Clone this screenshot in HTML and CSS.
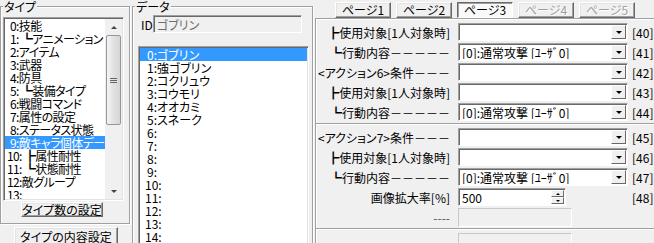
FILE: index.html
```html
<!DOCTYPE html>
<html>
<head>
	<title>database</title>
	<meta charset="utf-8">
	<link rel="stylesheet" href="styles.css">
</head>
<body>
	<div class="window">

		<div class="type-col">
			<fieldset class="group type-group">
				<legend>タイプ</legend>
				<div class="listbox type-list">
					<ul class="items">
						<li class="pad">0:技能</li>
						<li class="pad">1: ┗アニメーション</li>
						<li class="pad">2:アイテム</li>
						<li class="pad">3:武器</li>
						<li class="pad">4:防具</li>
						<li class="pad">5: ┗装備タイプ</li>
						<li class="pad">6:戦闘コマンド</li>
						<li class="pad">7:属性の設定</li>
						<li class="pad">8:ステータス状態</li>
						<li class="pad selected">9:敵キャラ個体データ</li>
						<li>10: ┣属性耐性</li>
						<li>11: ┗状態耐性</li>
						<li>12:敵グループ</li>
						<li>13:</li>
					</ul>
					<div class="vscroll">
						<span class="sb-arrow sb-up"></span>
						<span class="sb-thumb"><span class="sb-grip"></span></span>
						<span class="sb-track"></span>
						<span class="sb-arrow sb-down"></span>
					</div>
				</div>
				<button class="btn type-count" type="button">タイプ数の設定</button>
			</fieldset>
			<button class="btn type-content" type="button">タイプの内容設定</button>
		</div>

		<fieldset class="group data-group">
			<legend>データ</legend>
			<div class="id-row">
				<span class="id-label">ID</span>
				<input class="id-field" type="text" value="ゴブリン" readonly>
			</div>
			<ul class="listbox data-list">
				<li class="pad selected">0:ゴブリン</li>
				<li class="pad">1:強ゴブリン</li>
				<li class="pad">2:コクリュウ</li>
				<li class="pad">3:コウモリ</li>
				<li class="pad">4:オオカミ</li>
				<li class="pad">5:スネーク</li>
				<li class="pad">6:</li>
				<li class="pad">7:</li>
				<li class="pad">8:</li>
				<li class="pad">9:</li>
				<li>10:</li>
				<li>11:</li>
				<li>12:</li>
				<li>13:</li>
				<li>14:</li>
				<li>15:</li>
			</ul>
		</fieldset>

		<div class="page-col">
			<div class="tabs">
				<button class="tab" type="button">ページ1</button>
				<button class="tab" type="button">ページ2</button>
				<button class="tab tab_on" type="button">ページ3</button>
				<button class="tab" type="button" disabled>ページ4</button>
				<button class="tab" type="button" disabled>ページ5</button>
			</div>

			<div class="block">
				<div class="row">
					<span class="row__label">┣使用対象[1人対象時]</span>
					<div class="row__field"><div class="combo"><span class="combo__text"></span><span class="combo__btn"></span></div></div>
					<span class="row__num">[40]</span>
				</div>
				<div class="row">
					<span class="row__label">┗行動内容－－－－－</span>
					<div class="row__field"><div class="combo"><span class="combo__text">[0]:通常攻撃 [ﾕｰｻﾞ0]</span><span class="combo__btn"></span></div></div>
					<span class="row__num">[41]</span>
				</div>
				<div class="row">
					<span class="row__label">&lt;アクション6&gt;条件－－－</span>
					<div class="row__field"><div class="combo"><span class="combo__text"></span><span class="combo__btn"></span></div></div>
					<span class="row__num">[42]</span>
				</div>
				<div class="row">
					<span class="row__label">┣使用対象[1人対象時]</span>
					<div class="row__field"><div class="combo"><span class="combo__text"></span><span class="combo__btn"></span></div></div>
					<span class="row__num">[43]</span>
				</div>
				<div class="row">
					<span class="row__label">┗行動内容－－－－－</span>
					<div class="row__field"><div class="combo"><span class="combo__text">[0]:通常攻撃 [ﾕｰｻﾞ0]</span><span class="combo__btn"></span></div></div>
					<span class="row__num">[44]</span>
				</div>
			</div>

			<div class="block">
				<div class="row">
					<span class="row__label">&lt;アクション7&gt;条件－－－</span>
					<div class="row__field"><div class="combo"><span class="combo__text"></span><span class="combo__btn"></span></div></div>
					<span class="row__num">[45]</span>
				</div>
				<div class="row">
					<span class="row__label">┣使用対象[1人対象時]</span>
					<div class="row__field"><div class="combo"><span class="combo__text"></span><span class="combo__btn"></span></div></div>
					<span class="row__num">[46]</span>
				</div>
				<div class="row">
					<span class="row__label">┗行動内容－－－－－</span>
					<div class="row__field"><div class="combo"><span class="combo__text">[0]:通常攻撃 [ﾕｰｻﾞ0]</span><span class="combo__btn"></span></div></div>
					<span class="row__num">[47]</span>
				</div>
				<div class="row">
					<span class="row__label">画像拡大率[%]</span>
					<div class="row__field">
						<div class="spin">
							<span class="spin__text">500</span>
							<span class="spin__btns"><span class="spin__up"></span><span class="spin__down"></span></span>
						</div>
					</div>
					<span class="row__num">[48]</span>
				</div>
				<div class="row">
					<span class="row__label row__label_dim">----</span>
					<div class="row__field"><div class="static"></div></div>
				</div>
			</div>

			<div class="block">
				<div class="row">
					<span class="row__label"></span>
					<div class="row__field"><div class="static"></div></div>
				</div>
			</div>
		</div>

	</div>
</body>
</html>
```

FILE: styles.css
```css
* {
	box-sizing: border-box;
}
body {
	margin: 0;
	background: #f0f0f0;
	color: #000;
	font: 12px/13px "Noto Sans CJK JP", "Noto Sans CJK SC", sans-serif;
	font-feature-settings: "palt";
	overflow: hidden;
}
ul {
	margin: 0;
	padding: 0;
	list-style: none;
}
.window {
	display: flex;
	align-items: flex-start;
	width: 654px;
	height: 243px;
	overflow: hidden;
}

/* group boxes */
.group {
	margin: 0;
	padding: 0;
	min-width: 0;
	border: 1px solid #a0a0a0;
	box-shadow: inset 1px 1px 0 #fff, 1px 1px 0 #fff;
}
.group legend {
	margin-left: 2px;
	padding: 0 1px;
	line-height: 13px;
	background: #f0f0f0;
}

/* sunken boxes */
.listbox {
	background: #fff;
	border: 1px solid;
	border-color: #a0a0a0 #fff #fff #a0a0a0;
	box-shadow: inset 1px 1px 0 #696969, inset -1px -1px 0 #e3e3e3;
	padding: 1px;
	overflow: hidden;
}
.listbox li, .items li {
	height: 13px;
	padding-left: 2px;
	white-space: nowrap;
}
.selected {
	background: #3399ff;
	color: #fff;
}

.btn {
	font: inherit;
	line-height: 12px;
	padding: 0;
	color: #000;
	background: #f0f0f0;
	border: 1px solid;
	border-color: #fff #696969 #696969 #fff;
	box-shadow: inset -1px -1px 0 #a0a0a0, inset 1px 1px 0 #e3e3e3;
}

/* type column */
.type-col {
	width: 130px;
	display: flex;
	flex-direction: column;
	align-items: flex-start;
}
.type-group {
	width: 130px;
	padding-bottom: 6px;
}
.type-list {
	display: flex;
	width: 121px;
	height: 184px;
	margin: 4px 0 0 2px;
}
.type-list .items {
	flex: 1;
	overflow: hidden;
	letter-spacing: -0.6px;
}
.type-list li.pad {
	padding-left: 5px;
}
.vscroll {
	width: 17px;
	display: flex;
	flex-direction: column;
	align-items: center;
	background: #f0f0f0;
}
.sb-arrow {
	height: 16px;
	width: 17px;
	display: flex;
	align-items: center;
	justify-content: center;
}
.sb-arrow:after {
	content: '';
	border-left: 3px solid transparent;
	border-right: 3px solid transparent;
}
.sb-up:after {
	border-bottom: 3px solid #444;
}
.sb-down:after {
	border-top: 3px solid #444;
}
.sb-thumb {
	width: 15px;
	height: 90px;
	border: 1px solid #979797;
	border-radius: 2px;
	background: linear-gradient(to right, #f4f4f4, #e2e2e2 50%, #d6d6d6);
	display: flex;
	align-items: center;
	justify-content: center;
}
.sb-grip {
	width: 7px;
	height: 5px;
	border-top: 1px solid #666;
	border-bottom: 1px solid #666;
	background: linear-gradient(#666, #666) center / 100% 1px no-repeat;
}
.sb-track {
	flex: 1;
}
.type-count {
	width: 82px;
	height: 15px;
	margin: 1px 0 0 20px;
}
.type-content {
	width: 104px;
	height: 20px;
	margin: 3px 0 0 14px;
}

/* data column */
.data-group {
	width: 181px;
	height: 270px;
	margin-left: 2px;
}
.id-row {
	display: flex;
	align-items: center;
	margin-top: 2px;
	padding-left: 8px;
}
.id-label {
	width: 12px;
}
.id-field {
	width: 149px;
	height: 18px;
	padding: 0 0 0 3px;
	font: inherit;
	color: #6d6d6d;
	background: #f0f0f0;
	border: 1px solid;
	border-color: #a0a0a0 #fff #fff #a0a0a0;
	box-shadow: inset 1px 1px 0 #696969;
	outline: none;
}
.data-list {
	width: 171px;
	height: 230px;
	margin: 13px 0 0 5px;
}
.data-list li {
	padding-left: 5px;
}
.data-list li.pad {
	padding-left: 7px;
}

/* page column */
.page-col {
	flex: 1;
	margin-left: 2px;
}
.tabs {
	display: flex;
	gap: 5px;
	padding: 2px 0 0 20px;
}
.tab {
	width: 56px;
	height: 16px;
	padding: 0;
	font: inherit;
	line-height: 12px;
	color: #000;
	background: #f0f0f0;
	border: 1px solid;
	border-color: #fff #696969 #696969 #fff;
	box-shadow: inset -1px -1px 0 #a0a0a0, inset 1px 1px 0 #e3e3e3;
}
.tab_on {
	background: #fafafa;
	border-color: #696969 #fff #fff #696969;
	box-shadow: inset 1px 1px 0 #a0a0a0;
}
.tab:disabled {
	color: #a0a0a0;
	text-shadow: 1px 1px 0 #fff;
}

.block {
	display: flex;
	flex-direction: column;
	gap: 2px;
	height: 105px;
	padding: 4px 0 2px;
	border-top: 1px solid #a0a0a0;
	border-left: 1px solid #a0a0a0;
	box-shadow: inset 1px 1px 0 #fff;
}
.block:first-of-type {
	margin-top: 7px;
}
.row {
	display: flex;
	align-items: center;
	height: 18px;
	flex: none;
}
.row__label {
	width: 134px;
	text-align: right;
	white-space: nowrap;
}
.row__label_dim {
	color: #555;
}
.row__field {
	width: 170px;
	margin-left: 8px;
}
.row__num {
	margin-left: 4px;
}

.combo, .spin {
	display: flex;
	height: 18px;
	padding: 1px;
	background: #fff;
	border: 1px solid;
	border-color: #a0a0a0 #fff #fff #a0a0a0;
	box-shadow: inset 1px 1px 0 #696969;
}
.combo__text, .spin__text {
	flex: 1;
	padding-left: 2px;
	line-height: 15px;
	white-space: nowrap;
	overflow: hidden;
}
.combo__btn {
	width: 15px;
	display: flex;
	align-items: center;
	justify-content: center;
	background: #f0f0f0;
	border: 1px solid;
	border-color: #fff #696969 #696969 #fff;
}
.combo__btn:after {
	content: '';
	border-top: 3px solid #000;
	border-left: 3px solid transparent;
	border-right: 3px solid transparent;
}
.spin {
	width: 108px;
}
.spin__btns {
	width: 13px;
	display: flex;
	flex-direction: column;
}
.spin__up, .spin__down {
	flex: 1;
	display: flex;
	align-items: center;
	justify-content: center;
	background: #f0f0f0;
	border: 1px solid;
	border-color: #fff #696969 #696969 #fff;
}
.spin__up:after, .spin__down:after {
	content: '';
	border-left: 2px solid transparent;
	border-right: 2px solid transparent;
}
.spin__up:after {
	border-bottom: 2px solid #000;
}
.spin__down:after {
	border-top: 2px solid #000;
}
.static {
	width: 114px;
	height: 19px;
	border: 1px solid #c8c8c8;
	border-right-color: #fff;
	border-bottom-color: #fff;
}
```
